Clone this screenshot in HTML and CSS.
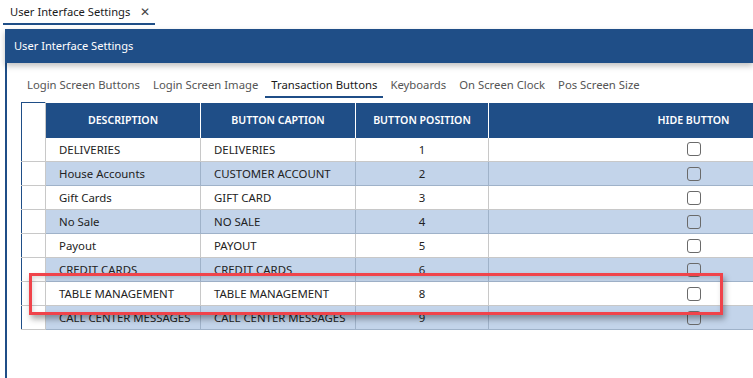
FILE: index.html
```html
<!DOCTYPE html>
<html lang="en">

<head>
    <meta charset="UTF-8">
    <meta name="viewport" content="width=device-width, initial-scale=1.0">
    <title>User Interface Settings</title>
    <link rel="stylesheet" href="styles.css">
</head>

<body>
    <div class="doc-tabs">
        <div class="doc-tab">User Interface Settings <span class="close">&#x2715;</span></div>
    </div>
    <div class="panel">
        <div class="panel-head">User Interface Settings</div>
        <ul class="tabs">
            <li>Login Screen Buttons</li>
            <li>Login Screen Image</li>
            <li class="active">Transaction Buttons</li>
            <li>Keyboards</li>
            <li>On Screen Clock</li>
            <li>Pos Screen Size</li>
        </ul>
        <div class="grid-wrap">
            <table class="grid">
                <colgroup>
                    <col class="c-row">
                    <col class="c-desc">
                    <col class="c-cap">
                    <col class="c-pos">
                    <col class="c-hide">
                </colgroup>
                <thead>
                    <tr>
                        <th class="rowhead"></th>
                        <th>DESCRIPTION</th>
                        <th>BUTTON CAPTION</th>
                        <th>BUTTON POSITION</th>
                        <th>HIDE BUTTON</th>
                    </tr>
                </thead>
                <tbody>
                    <tr>
                        <td class="rowhead"></td>
                        <td>DELIVERIES</td>
                        <td>DELIVERIES</td>
                        <td class="num">1</td>
                        <td class="chk"><span class="box"></span></td>
                    </tr>
                    <tr class="alt">
                        <td class="rowhead"></td>
                        <td>House Accounts</td>
                        <td>CUSTOMER ACCOUNT</td>
                        <td class="num">2</td>
                        <td class="chk"><span class="box"></span></td>
                    </tr>
                    <tr>
                        <td class="rowhead"></td>
                        <td>Gift Cards</td>
                        <td>GIFT CARD</td>
                        <td class="num">3</td>
                        <td class="chk"><span class="box"></span></td>
                    </tr>
                    <tr class="alt">
                        <td class="rowhead"></td>
                        <td>No Sale</td>
                        <td>NO SALE</td>
                        <td class="num">4</td>
                        <td class="chk"><span class="box"></span></td>
                    </tr>
                    <tr>
                        <td class="rowhead"></td>
                        <td>Payout</td>
                        <td>PAYOUT</td>
                        <td class="num">5</td>
                        <td class="chk"><span class="box"></span></td>
                    </tr>
                    <tr class="alt">
                        <td class="rowhead"></td>
                        <td>CREDIT CARDS</td>
                        <td>CREDIT CARDS</td>
                        <td class="num">6</td>
                        <td class="chk"><span class="box"></span></td>
                    </tr>
                    <tr>
                        <td class="rowhead"></td>
                        <td>TABLE MANAGEMENT</td>
                        <td>TABLE MANAGEMENT</td>
                        <td class="num">8</td>
                        <td class="chk"><span class="box"></span></td>
                    </tr>
                    <tr class="alt">
                        <td class="rowhead"></td>
                        <td>CALL CENTER MESSAGES</td>
                        <td>CALL CENTER MESSAGES</td>
                        <td class="num">9</td>
                        <td class="chk"><span class="box"></span></td>
                    </tr>
                </tbody>
            </table>
        </div>
    </div>
    <div class="highlight"></div>
</body>

</html>
```

FILE: styles.css
```css
* {
    padding: 0;
    margin: 0;
    box-sizing: border-box;
}

body {
    width: 753px;
    height: 378px;
    overflow: hidden;
    background: #fff;
    font-family: "Noto Sans", "Open Sans", sans-serif;
    font-size: 11.4px;
    color: #222;
    position: relative;
}

/* document tab strip */
.doc-tabs {
    height: 29px;
    padding-left: 3px;
}

.doc-tab {
    display: inline-block;
    width: 152px;
    height: 25px;
    padding: 3px 0 0 7px;
    font-size: 11.2px;
    color: #1a1a1a;
    border-bottom: 2px solid #1f4e87;
    white-space: nowrap;
}

.doc-tab .close {
    font-size: 12px;
    margin-left: 7px;
    color: #444;
}

/* panel */
.panel {
    margin-left: 5px;
    height: 349px;
    border-left: 2px solid #1f4e87;
}

.panel-head {
    height: 34px;
    margin-left: -2px;
    background: #1f4e87;
    color: #fff;
    font-size: 11.1px;
    line-height: 34px;
    padding-left: 9px;
    box-shadow: 0 3px 6px rgba(0, 0, 0, 0.25);
    position: relative;
}

.tabs {
    display: flex;
    list-style-type: none;
    padding: 10px 0 0 14px;
    height: 39px;
}

.tabs li {
    padding: 0 6px;
    margin-right: 1px;
    height: 25px;
    line-height: 24px;
    font-size: 11.3px;
    color: #555;
    white-space: nowrap;
}

.tabs li.active {
    color: #1a1a1a;
    border-bottom: 2px solid #1f4e87;
}

/* grid */
.grid-wrap {
    margin-left: 14px;
    width: 732px;
    overflow: hidden;
}

.grid {
    width: 877px;
    table-layout: fixed;
    border-collapse: collapse;
}

.c-row { width: 24px; }
.c-desc { width: 155px; }
.c-cap { width: 155px; }
.c-pos { width: 133px; }
.c-hide { width: 410px; }

.grid th {
    height: 35px;
    background: #1f4e87;
    color: #fff;
    font-size: 10.6px;
    font-weight: 600;
    text-align: center;
    border-right: 1px solid #fff;
}

.grid th.rowhead {
    background: #fff;
    border-left: 1px solid #1f4e87;
    border-top: 1px solid #1f4e87;
    border-right: 1px solid #c8c8c8;
}

.grid td {
    height: 24px;
    padding: 0 13px;
    white-space: nowrap;
    overflow: hidden;
    border-right: 1px solid #c8c8c8;
    border-bottom: 1px solid #c8c8c8;
}

.grid td.rowhead {
    background: #fff;
    border-left: 1px solid #1f4e87;
    border-bottom: 1px solid #c8c8c8;
}

.grid tr.alt td {
    background: #c3d4ea;
    border-right-color: #9fb2c9;
    border-bottom-color: #9fb2c9;
}

.grid tr.alt td.rowhead {
    background: #fff;
    border-right-color: #c8c8c8;
    border-bottom-color: #c8c8c8;
}

.grid td.num {
    text-align: center;
}

.box {
    display: block;
    width: 14px;
    height: 14px;
    margin: 0 auto;
    border: 1px solid #6a6a6a;
    border-radius: 3px;
}

/* annotation box */
.highlight {
    position: absolute;
    left: 29px;
    top: 273px;
    width: 694px;
    height: 42px;
    border: 3px solid #f0434a;
    box-shadow: 2px 4px 6px rgba(0, 0, 0, 0.35), inset 1px 2px 5px rgba(0, 0, 0, 0.15);
}
```
